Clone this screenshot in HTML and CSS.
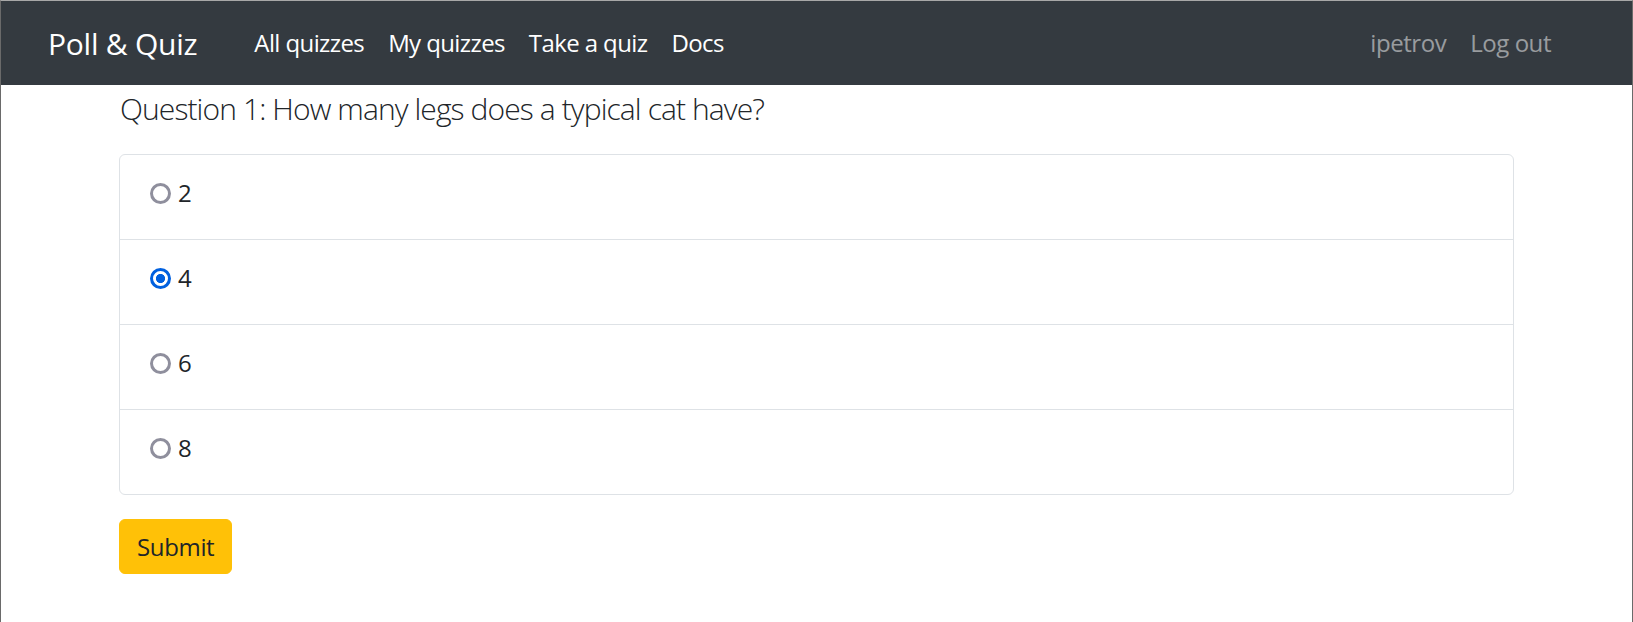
FILE: index.html
```html
<!DOCTYPE html>
<html lang="en">
<head>
<meta charset="utf-8">
<title>Poll &amp; Quiz</title>
<link rel="stylesheet" href="styles.css">
</head>
<body>
<div class="frame">
  <nav class="navbar">
    <a class="brand" href="#">Poll &amp; Quiz</a>
    <ul class="nav-links">
      <li><a class="nav-link" href="#">All quizzes</a></li>
      <li><a class="nav-link" href="#">My quizzes</a></li>
      <li><a class="nav-link" href="#">Take a quiz</a></li>
      <li><a class="nav-link" href="#">Docs</a></li>
    </ul>
    <ul class="nav-links nav-right">
      <li><a class="nav-link muted" href="#">ipetrov</a></li>
      <li><a class="nav-link muted" href="#">Log out</a></li>
    </ul>
  </nav>
  <main class="container">
    <h1 class="question">Question 1: How many legs does a typical cat have?</h1>
    <form class="quiz-form">
      <div class="list-group">
        <label class="option"><span class="radio"></span><span class="option-text">2</span></label>
        <label class="option"><span class="radio checked"></span><span class="option-text">4</span></label>
        <label class="option"><span class="radio"></span><span class="option-text">6</span></label>
        <label class="option"><span class="radio"></span><span class="option-text">8</span></label>
      </div>
      <button type="button" class="btn-submit">Submit</button>
    </form>
  </main>
</div>
</body>
</html>
```

FILE: styles.css
```css
html, body {
  margin: 0;
  padding: 0;
  background: #fff;
}

body {
  font-family: "Segoe UI", "Open Sans", "Noto Sans", sans-serif;
  color: #212529;
}

.frame {
  min-height: 622px;
  box-sizing: border-box;
  border-top: 1px solid #a8a8a8;
  border-left: 1px solid #6a6a6a;
  border-right: 1px solid #6a6a6a;
}

.navbar {
  height: 84px;
  background: #343a40;
  display: flex;
  align-items: center;
  padding: 0 69px 0 47px;
}

.brand {
  font-size: 30px;
  line-height: 45px;
  color: #fff;
  text-decoration: none;
  margin-right: 45px;
  letter-spacing: -0.25px;
}

.nav-links {
  list-style: none;
  margin: 0;
  padding: 0;
  display: flex;
}

.nav-right {
  margin-left: auto;
}

.nav-link {
  display: block;
  padding: 0 12px;
  font-size: 24px;
  line-height: 36px;
  color: #fff;
  text-decoration: none;
  letter-spacing: -0.6px;
}

.nav-link.muted {
  color: rgba(255, 255, 255, 0.5);
  letter-spacing: -0.45px;
}

.container {
  width: 1395px;
  margin: 0 auto;
  padding-top: 6px;
}

.question {
  margin: 0 0 27px 1px;
  font-size: 30px;
  line-height: 36px;
  font-weight: 300;
  letter-spacing: -0.9px;
}

.list-group {
  border: 1px solid #dee2e6;
  border-radius: 6px;
  margin-bottom: 24px;
}

.option {
  display: flex;
  align-items: center;
  height: 76px;
  padding: 0 0 8px 30px;
  font-size: 24px;
  line-height: 36px;
}

.option + .option {
  border-top: 1px solid #dee2e6;
}

.radio {
  width: 21px;
  height: 21px;
  box-sizing: border-box;
  border: 3px solid #8f8f9d;
  border-radius: 50%;
  margin-right: 7px;
  background: #fff;
}

.radio.checked {
  border: 3px solid #0060df;
  background: radial-gradient(circle, #0060df 0, #0060df 4.3px, #fff 4.8px);
}

.btn-submit {
  font-family: inherit;
  font-size: 24px;
  line-height: 35px;
  padding: 9px 17px;
  border: 1px solid #ffc107;
  background: #ffc107;
  color: #212529;
  border-radius: 6px;
  letter-spacing: -0.35px;
}
```
